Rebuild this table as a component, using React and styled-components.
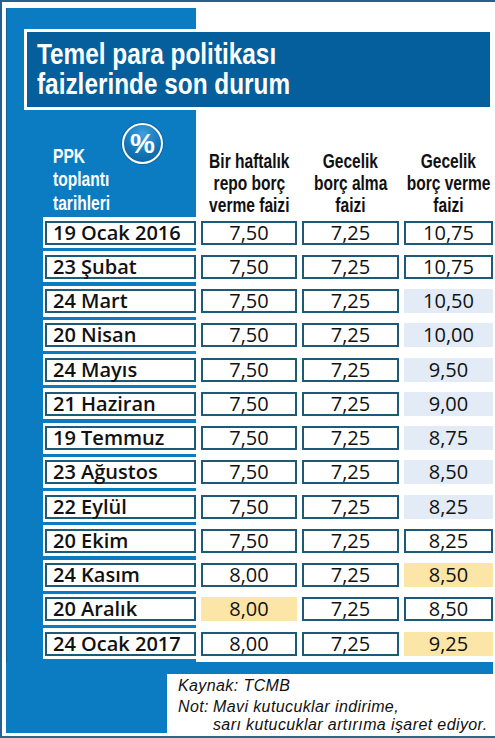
import React from "react";
import styled, { createGlobalStyle } from "styled-components";

const GlobalStyle = createGlobalStyle`
  body {
    margin: 0;
    background: #ffffff;
  }
`;

const BLUE = "#0b7cc2";
const HEAVY = `"Liberation Sans", Arial, sans-serif`;

const Frame = styled.div`
  width: 495px;
  height: 738px;
  box-sizing: border-box;
  border-top: 2px solid #24628e;
  border-left: 2px solid #24628e;
  border-bottom: 2px solid #2a6a86;
  padding: 6px 0 3px 4px;
`;

const Panel = styled.div`
  height: 100%;
  display: flex;
  flex-direction: column;
  background: linear-gradient(to right, ${BLUE} 0 190px, #ffffff 190px);
  box-shadow: inset 1px 0 0 #0a5f96;
  & > * {
    flex-shrink: 0;
  }
`;

const TitleBar = styled.div`
  margin: 21px 2px 0 18px;
  border: 3px solid #ffffff;
  background: #045f9c;
  padding: 7px 10px 8px;
`;

/* condensed look: no narrow face is installed, so squeeze a bold sans */
const Squeeze = styled.span`
  display: inline-block;
  white-space: nowrap;
  transform: scaleX(${(p) => p.$x});
  transform-origin: ${(p) => p.$origin || "left"} center;
`;

const Title = styled.h1`
  margin: 0;
  font-family: ${HEAVY};
  font-weight: 700;
  font-size: 29px;
  line-height: 30px;
  color: #ffffff;
`;

const Grid = styled.div`
  display: grid;
  grid-template-columns: 151px 96px 97px 89px;
  column-gap: 5px;
`;

const Header = styled(Grid)`
  height: 107px;
  box-sizing: border-box;
  margin-left: 39px;
  padding-bottom: 1px;
  align-items: end;
`;

const DateHead = styled.div`
  display: flex;
  align-self: stretch;
  gap: 7px;
  padding-left: 8px;
`;

const HeadText = styled.div`
  width: 62px;
  align-self: flex-end;
  padding-bottom: 2px;
  font-family: ${HEAVY};
  font-weight: 700;
  font-size: 20.5px;
  line-height: 23.5px;
  color: #ffffff;
`;

const Badge = styled.div`
  margin-top: 13px;
  width: 41px;
  height: 41px;
  box-sizing: border-box;
  border-radius: 50%;
  border: 2px solid #ffffff;
  background: radial-gradient(circle at 50% 25%, #3f9fdc 0%, #1476b8 55%, #0b5e9a 100%);
  box-shadow: 0 0 0 1px #0a639f;
  display: flex;
  align-items: center;
  justify-content: center;
  color: #ffffff;
  font-family: ${HEAVY};
  font-weight: 700;
  font-size: 28px;
  line-height: 1;
`;

const ColHead = styled.div`
  display: flex;
  flex-direction: column;
  align-items: center;
  font-family: ${HEAVY};
  font-weight: 700;
  font-size: 21px;
  line-height: 22px;
  color: #111111;
`;

const Rows = styled.div`
  display: flex;
  flex-direction: column;
  gap: 3.25px;
`;

const Strip = styled(Grid)`
  margin-left: 37px;
  padding: 3.5px 2px;
  background: #ffffff;
`;

const Cell = styled.div`
  height: 24px;
  box-sizing: border-box;
  border: 2px solid ${(p) => (p.$tone ? "transparent" : "#1d5a78")};
  background: ${(p) =>
    p.$tone === "down" ? "#e3ecf6" : p.$tone === "up" ? "#fbe6a8" : "#ffffff"};
  font-family: "Open Sans", "Liberation Sans", sans-serif;
  font-size: 20px;
  line-height: 20px;
  color: #111111;
  text-align: ${(p) => (p.$date ? "left" : "center")};
  padding-left: ${(p) => (p.$date ? "6px" : "0")};
  font-weight: ${(p) => (p.$date ? 600 : 400)};
  white-space: nowrap;
`;

const Bar = styled.div`
  margin: 3px 2px 0 0;
  height: 12px;
  background: ${BLUE};
`;

const Footer = styled.div`
  flex: 1 1 auto;
  min-height: 0;
  display: grid;
  grid-template-columns: 161px 1fr;
`;

const FooterSide = styled.div`
  background: ${BLUE};
`;

const Notes = styled.div`
  background: #ffffff;
  padding: 2px 0 0 11px;
  font-family: "Liberation Sans", Arial, sans-serif;
  font-style: italic;
  font-size: 16px;
  letter-spacing: 0.4px;
  color: #111111;
`;

const Source = styled.div`
  line-height: 20px;
  margin-bottom: 2px;
`;

const Note = styled.div`
  display: flex;
  gap: 4px;
  line-height: 17.5px;
`;

const rows = [
  ["19 Ocak 2016", "7,50", "7,25", "10,75"],
  ["23 Şubat", "7,50", "7,25", "10,75"],
  ["24 Mart", "7,50", "7,25", "10,50", null, "down"],
  ["20 Nisan", "7,50", "7,25", "10,00", null, "down"],
  ["24 Mayıs", "7,50", "7,25", "9,50", null, "down"],
  ["21 Haziran", "7,50", "7,25", "9,00", null, "down"],
  ["19 Temmuz", "7,50", "7,25", "8,75", null, "down"],
  ["23 Ağustos", "7,50", "7,25", "8,50", null, "down"],
  ["22 Eylül", "7,50", "7,25", "8,25", null, "down"],
  ["20 Ekim", "7,50", "7,25", "8,25"],
  ["24 Kasım", "8,00", "7,25", "8,50", null, "up"],
  ["20 Aralık", "8,00", "7,25", "8,50", "up", null],
  ["24 Ocak 2017", "8,00", "7,25", "9,25", null, "up"],
];

const heads = [
  ["Bir haftalık", "repo borç", "verme faizi"],
  ["Gecelik", "borç alma", "faizi"],
  ["Gecelik", "borç verme", "faizi"],
];

export default function App() {
  return (
    <>
      <GlobalStyle />
      <Frame>
        <Panel>
          <TitleBar>
            <Title>
              <Squeeze $x={0.84}>Temel para politikası</Squeeze>
              <br />
              <Squeeze $x={0.84}>faizlerinde son durum</Squeeze>
            </Title>
          </TitleBar>

          <Header>
            <DateHead>
              <HeadText>
                {["PPK", "toplantı", "tarihleri"].map((l) => (
                  <div key={l}>
                    <Squeeze $x={0.76}>{l}</Squeeze>
                  </div>
                ))}
              </HeadText>
              <Badge>%</Badge>
            </DateHead>
            {heads.map((lines, i) => (
              <ColHead key={i}>
                {lines.map((l) => (
                  <Squeeze key={l} $x={0.74} $origin="center">
                    {l}
                  </Squeeze>
                ))}
              </ColHead>
            ))}
          </Header>

          <Rows>
            {rows.map(([date, repo, alma, verme, repoTone, vermeTone]) => (
              <Strip key={date}>
                <Cell $date>{date}</Cell>
                <Cell $tone={repoTone}>{repo}</Cell>
                <Cell>{alma}</Cell>
                <Cell $tone={vermeTone}>{verme}</Cell>
              </Strip>
            ))}
          </Rows>

          <Bar />
          <Footer>
            <FooterSide />
            <Notes>
              <Source>Kaynak: TCMB</Source>
              <Note>
                <span>Not:</span>
                <span>
                  Mavi kutucuklar indirime,
                  <br />
                  sarı kutucuklar artırıma işaret ediyor.
                </span>
              </Note>
            </Notes>
          </Footer>
        </Panel>
      </Frame>
    </>
  );
}
